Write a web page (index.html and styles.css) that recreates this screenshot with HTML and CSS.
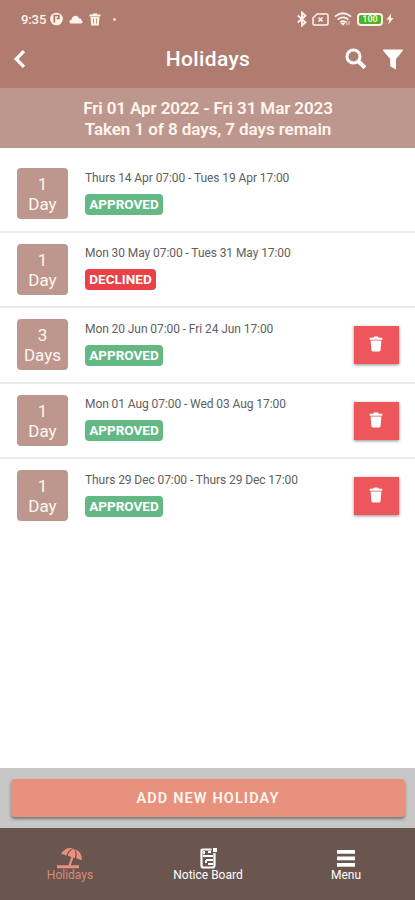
FILE: index.html
```html
<!DOCTYPE html>
<html lang="en">
<head>
<meta charset="utf-8">
<meta name="viewport" content="width=device-width, initial-scale=1">
<title>Holidays</title>
<link rel="stylesheet" href="styles.css">
</head>
<body>
<svg class="defs" width="0" height="0" aria-hidden="true">
  <symbol id="trash" viewBox="0 0 14 16"><path d="M.7 1.800h3.500L5 .6h4l.8 1.200h3.500v2H.7zM1.600 4.600h10.800l-.8 9.500q-.1 1.400-1.500 1.400H3.900q-1.400 0-1.500-1.400z"/></symbol>
</svg>
<div class="app">
  <div class="status">
    <span class="clock">9:35</span>
    <svg class="s-app" width="13" height="14" viewBox="0 0 13 14"><circle cx="6.5" cy="7" r="6.3" fill="#fff3ec"/><path d="M4.300 10.500v-7h4.500v3H6.600" fill="none" stroke="#a87366" stroke-width="1.700"/></svg>
    <svg class="s-cloud" width="14" height="9" viewBox="0 0 14 9"><path d="M2.800 8.500C-.4 8.500-.2 5 2.500 4.800 3 .4 8.500-.6 9.800 3.300c2.100-.2 2.800 1.300 2.700 2.300 1.700.7 1.200 2.900-.5 2.900z" fill="#fff3ec"/></svg>
    <svg class="s-bin" width="12" height="13" viewBox="0 0 12 13"><path d="M.5 1.500h3l.7-1h3.600l.7 1h3v2H.5zM1.500 4h9l-.7 8.500H2.200z" fill="#fff3ec"/><path d="M4.500 5.500v5M7.500 5.500v5" stroke="#b07c6f" stroke-width=".8"/></svg>
    <i class="s-dot"></i>
    <div class="s-right">
      <svg width="10" height="16" viewBox="0 0 10 16"><path d="M.8 4.500l7.700 6.700L5 14.500v-13l3.500 3.300L.8 11.500" fill="none" stroke="#fff3ec" stroke-width="1.800"/></svg>
      <svg width="17" height="13" viewBox="0 0 17 13"><path d="M5 1h9.500q1.500 0 1.500 1.500v8q0 1.500-1.500 1.500h-12Q1 12 1 10.500V5z" fill="none" stroke="#fff3ec" stroke-width="1.500"/><path d="M6.500 4.500l4 4m0-4l-4 4" stroke="#fff3ec" stroke-width="1.600"/></svg>
      <svg width="18" height="14" viewBox="0 0 18 14"><path d="M.9 4.600q8.100-6.700 16.200 0M3.600 7.600q5.400-4.400 10.800 0M6.200 10.200q2.800-2.200 5.600 0" fill="none" stroke="#fff3ec" stroke-width="1.700"/><path d="M7 11h4l-2 2.300zM12.800 9v4M15 9v4" fill="#fff3ec" stroke="#fff3ec" stroke-width=".8"/></svg>
      <span class="battery">100</span>
      <svg class="bolt" width="8" height="12" viewBox="0 0 8 12"><path d="M5.300.6L.5 6.700h2.800l-1 4.800 5.200-6.400H4.700z" fill="#fff3ec"/></svg>
    </div>
  </div>
  <header class="toolbar">
    <svg class="back" width="14" height="20" viewBox="0 0 14 20"><path d="M12 2.200L4.200 10l7.800 7.800" fill="none" stroke="#fff" stroke-width="3.300"/></svg>
    <h1>Holidays</h1>
    <svg class="search" width="22" height="22" viewBox="0 0 22 22"><circle cx="8.500" cy="8.500" r="6.500" fill="none" stroke="#fff" stroke-width="3"/><path d="M13 13l7 6.800" stroke="#fff" stroke-width="4"/></svg>
    <svg class="filter" width="20" height="21" viewBox="0 0 20 21"><path d="M.2.500h19.600v1.200L13 10v10.500l-5.800-3.200V10L.2 1.700z" fill="#fff"/></svg>
  </header>
  <section class="summary"><div>Fri 01 Apr 2022 - Fri 31 Mar 2023</div><div class="taken">Taken 1 of 8 days, 7 days remain</div></section>
  <main>
    <article class="row"><div class="days"><span>1</span><span>Day</span></div><div class="info"><p>Thurs 14 Apr 07:00 - Tues 19 Apr 17:00</p><b class="badge">APPROVED</b></div></article>
    <article class="row"><div class="days"><span>1</span><span>Day</span></div><div class="info"><p>Mon 30 May 07:00 - Tues 31 May 17:00</p><b class="badge declined">DECLINED</b></div></article>
    <article class="row"><div class="days"><span>3</span><span>Days</span></div><div class="info"><p>Mon 20 Jun 07:00 - Fri 24 Jun 17:00</p><b class="badge">APPROVED</b></div><button class="delete" aria-label="Delete"><svg width="14" height="16"><use href="#trash"/></svg></button></article>
    <article class="row"><div class="days"><span>1</span><span>Day</span></div><div class="info"><p>Mon 01 Aug 07:00 - Wed 03 Aug 17:00</p><b class="badge">APPROVED</b></div><button class="delete" aria-label="Delete"><svg width="14" height="16"><use href="#trash"/></svg></button></article>
    <article class="row"><div class="days"><span>1</span><span>Day</span></div><div class="info"><p>Thurs 29 Dec 07:00 - Thurs 29 Dec 17:00</p><b class="badge">APPROVED</b></div><button class="delete" aria-label="Delete"><svg width="14" height="16"><use href="#trash"/></svg></button></article>
  </main>
  <div class="action"><button class="add">ADD NEW HOLIDAY</button></div>
  <nav>
    <a class="tab active"><svg width="28" height="22" viewBox="0 0 28 22"><path d="M5 6.800Q9.500-.5 17 1.300q-5 1.700-6.500 7.200zM11.700 8.800q1.800-5.600 6-7 3.100 3.500 1 9.200zM18.800 2q7.400 2.900 7.100 11.300l-5.800-2q1.800-5-1.300-9.300z"/><path d="M15.500 9.500l2 .7-2.700 8H23v3H1v-3h11.500z"/></svg><span>Holidays</span></a>
    <a class="tab"><svg width="18" height="22" viewBox="0 0 18 22"><path d="M3.500 2.500h9M15.500 6v12.500q0 2-2 2h-9q-2 0-2-2v-15q0-1 1-1" fill="none" stroke="#fff" stroke-width="2.200"/><path d="M14 1h4v4h-4zM4 4h2v3H4zM9 4h3v2H9zM4 8h10v2H4zM7 12h7v2H7zM6 13h2v3H6zM9 16h5v2H9z" fill="#fff"/></svg><span>Notice Board</span></a>
    <a class="tab"><svg width="18" height="22" viewBox="0 0 18 22"><path d="M0 3h18v3.700H0zM0 9.500h18v3.700H0zM0 16h18v3.700H0z"/></svg><span>Menu</span></a>
  </nav>
</div>
</body>
</html>
```
FILE: styles.css
```css
* { box-sizing: border-box; }
body { margin: 0; font-family: Roboto, "Liberation Sans", sans-serif; background: #fff; }
button { border: 0; padding: 0; font: inherit; color: #fff; }
svg { flex: none; }
.defs { display: none; }
.app { height: 900px; display: flex; flex-direction: column; overflow: hidden; }
.status { height: 37px; flex: none; display: flex; align-items: center; background: #b07c6f; color: #fff3ec; padding: 1px 21px 0 21px; }
.clock { width: 28px; font-size: 13px; font-weight: 500; letter-spacing: -.1px; }
.s-app { margin-left: 1px; }
.s-cloud { margin-left: 6px; }
.s-bin { margin-left: 6px; }
.s-dot { width: 3px; height: 3px; border-radius: 50%; background: #f1ddd4; margin-left: 12px; }
.s-right { margin-left: auto; display: flex; align-items: center; gap: 5px; }
.battery { width: 26px; height: 13px; border: 2px solid #fff3ec; border-radius: 4px; background: #4bb51b; color: #e7f6d8; font-size: 9px; line-height: 9px; font-weight: 700; text-align: center; }
.bolt { margin-left: -2px; }
.toolbar { height: 51px; flex: none; display: flex; align-items: center; background: #b07c6f; padding: 0 12px 7px 12px; }
.toolbar h1 { flex: 1; margin: 0 0 0 77px; text-align: center; color: #fff; font-size: 21px; line-height: 28px; font-weight: 500; letter-spacing: .35px; padding-right: 32px; }
.search { margin-right: 16px; }
.summary { height: 60px; flex: none; background: #bd978d; color: #fff6ef; text-align: center; font-size: 17px; line-height: 20.500px; font-weight: 600; letter-spacing: -.1px; padding: 10px 0 0 1px; }
.taken { letter-spacing: -.07px; }
main { flex: 1; }
.row { height: 75.500px; display: flex; align-items: flex-start; padding: 20px 16px 0 17px; border-bottom: 2px solid #ebebeb; }
.row:first-child { height: 84.500px; }
.row:not(:first-child) { padding-top: 11px; }
.row:last-child { border-bottom: 0; }
.days { width: 51px; height: 51px; border-radius: 4px; background: #bd978d; color: #fff6ef; display: flex; flex-direction: column; align-items: center; padding-top: 6px; font-size: 17px; line-height: 20px; }
.info { flex: 1; margin-left: 17px; }
.info p { margin: 1.900px 0 8.100px; font-size: 12px; line-height: 16px; letter-spacing: -.08px; color: #606060; white-space: nowrap; }
.badge { display: block; width: 78px; height: 21px; border-radius: 4px; background: #64b884; color: #fff; text-align: center; font-size: 13.500px; line-height: 21px; font-weight: 700; }
.declined { width: 71px; background: #ea4146; }
.delete { width: 45px; height: 38px; margin-top: 7px; background: #ed575b; display: flex; align-items: center; justify-content: center; box-shadow: 0 1px 3px rgba(0,0,0,.45); }
.delete svg { fill: #fff; margin: 0 1px 2px 0; }
.action { height: 60px; flex: none; background: #c7c7c7; padding: 11px 10px 0 11px; }
.add { display: block; width: 100%; height: 38px; border-radius: 4px; background: #e8917d; color: #fff6ef; font-size: 14.500px; font-weight: 600; letter-spacing: 1.120px; box-shadow: 0 2px 3px rgba(0,0,0,.4); }
nav { height: 72px; flex: none; background: #6a564f; display: grid; grid-template-columns: repeat(3, 1fr); padding-left: 1px; }
.tab { display: flex; flex-direction: column; align-items: center; padding-top: 19px; color: #fff; fill: #fff; font-size: 12px; line-height: 14px; }
.tab span { margin-top: -1px; }
.active { color: #d78b79; fill: #e8917d; }
```
